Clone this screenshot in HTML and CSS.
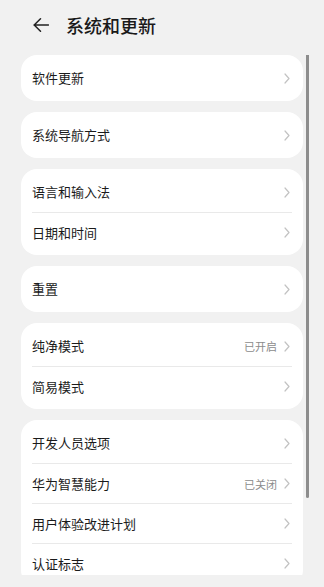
FILE: index.html
```html
<!DOCTYPE html>
<html lang="zh-CN">
<head>
<meta charset="utf-8">
<title>系统和更新</title>
<link rel="stylesheet" href="styles.css">
</head>
<body>
<div class="screen">
  <header class="topbar">
    <svg class="back" width="16" height="14" viewBox="0 0 16 14"><path d="M15.5 7H1M7.5 0.8L1.2 7l6.3 6.2" fill="none" stroke="#222" stroke-width="1.5" stroke-linecap="round" stroke-linejoin="round"/></svg>
    <h1 class="title">系统和更新</h1>
  </header>
  <div class="viewport">
    <div class="list">
      <section class="card">
        <div class="row"><span class="label">软件更新</span><svg class="chev" viewBox="0 0 6 11"><path d="M1 1l4 4.5L1 10"/></svg></div>
      </section>
      <section class="card">
        <div class="row"><span class="label">系统导航方式</span><svg class="chev" viewBox="0 0 6 11"><path d="M1 1l4 4.5L1 10"/></svg></div>
      </section>
      <section class="card">
        <div class="row"><span class="label">语言和输入法</span><svg class="chev" viewBox="0 0 6 11"><path d="M1 1l4 4.5L1 10"/></svg></div>
        <div class="row"><span class="label">日期和时间</span><svg class="chev" viewBox="0 0 6 11"><path d="M1 1l4 4.5L1 10"/></svg></div>
      </section>
      <section class="card">
        <div class="row"><span class="label">重置</span><svg class="chev" viewBox="0 0 6 11"><path d="M1 1l4 4.5L1 10"/></svg></div>
      </section>
      <section class="card">
        <div class="row"><span class="label">纯净模式</span><span class="value">已开启</span><svg class="chev" viewBox="0 0 6 11"><path d="M1 1l4 4.5L1 10"/></svg></div>
        <div class="row"><span class="label">简易模式</span><svg class="chev" viewBox="0 0 6 11"><path d="M1 1l4 4.5L1 10"/></svg></div>
      </section>
      <section class="card">
        <div class="row"><span class="label">开发人员选项</span><svg class="chev" viewBox="0 0 6 11"><path d="M1 1l4 4.5L1 10"/></svg></div>
        <div class="row"><span class="label">华为智慧能力</span><span class="value">已关闭</span><svg class="chev" viewBox="0 0 6 11"><path d="M1 1l4 4.5L1 10"/></svg></div>
        <div class="row"><span class="label">用户体验改进计划</span><svg class="chev" viewBox="0 0 6 11"><path d="M1 1l4 4.5L1 10"/></svg></div>
        <div class="row"><span class="label">认证标志</span><svg class="chev" viewBox="0 0 6 11"><path d="M1 1l4 4.5L1 10"/></svg></div>
      </section>
    </div>
    <div class="scrollbar"></div>
  </div>
</div>
</body>
</html>
```

FILE: styles.css
```css
html, body {
  margin: 0;
  padding: 0;
}
body {
  font-family: "Noto Sans CJK SC", "Noto Sans", sans-serif;
  background: #f1f1f1;
  color: #1b1b1b;
}
.screen {
  width: 324px;
  height: 587px;
  overflow: hidden;
  background: #f1f1f1;
  display: flex;
  flex-direction: column;
}
.topbar {
  height: 50px;
  flex: none;
  display: flex;
  align-items: center;
  padding-left: 33px;
  gap: 17px;
}
.back {
  display: block;
}
.title {
  margin: 0;
  font-size: 18px;
  font-weight: 500;
  line-height: 24px;
  color: #1a1a1a;
}
.viewport {
  position: relative;
  margin-top: 5px;
  height: 520px;
  overflow: hidden;
  flex: none;
}
.list {
  display: flex;
  flex-direction: column;
  gap: 11px;
  padding: 0 21px;
}
.card {
  background: #fff;
  border-radius: 16px;
  padding: 3px 11px 3px 11px;
}
.row {
  height: 40px;
  display: flex;
  align-items: center;
  border-top: 1px solid #e9e9e9;
  box-sizing: border-box;
}
.row:first-child {
  border-top: none;
}
.label {
  flex: 1;
  font-size: 13px;
  line-height: 18px;
  color: #1b1b1b;
}
.value {
  font-size: 11px;
  line-height: 16px;
  color: #8c8c8c;
  margin-right: 7px;
}
.chev {
  width: 6px;
  height: 11px;
  flex: none;
  margin-right: 2px;
  fill: none;
  stroke: #c2c2c2;
  stroke-width: 1.2;
  stroke-linecap: round;
  stroke-linejoin: round;
}
.scrollbar {
  position: absolute;
  left: 306px;
  top: -8px;
  width: 3px;
  height: 451px;
  border-radius: 2px;
  background: #8d8d8d;
}
```
